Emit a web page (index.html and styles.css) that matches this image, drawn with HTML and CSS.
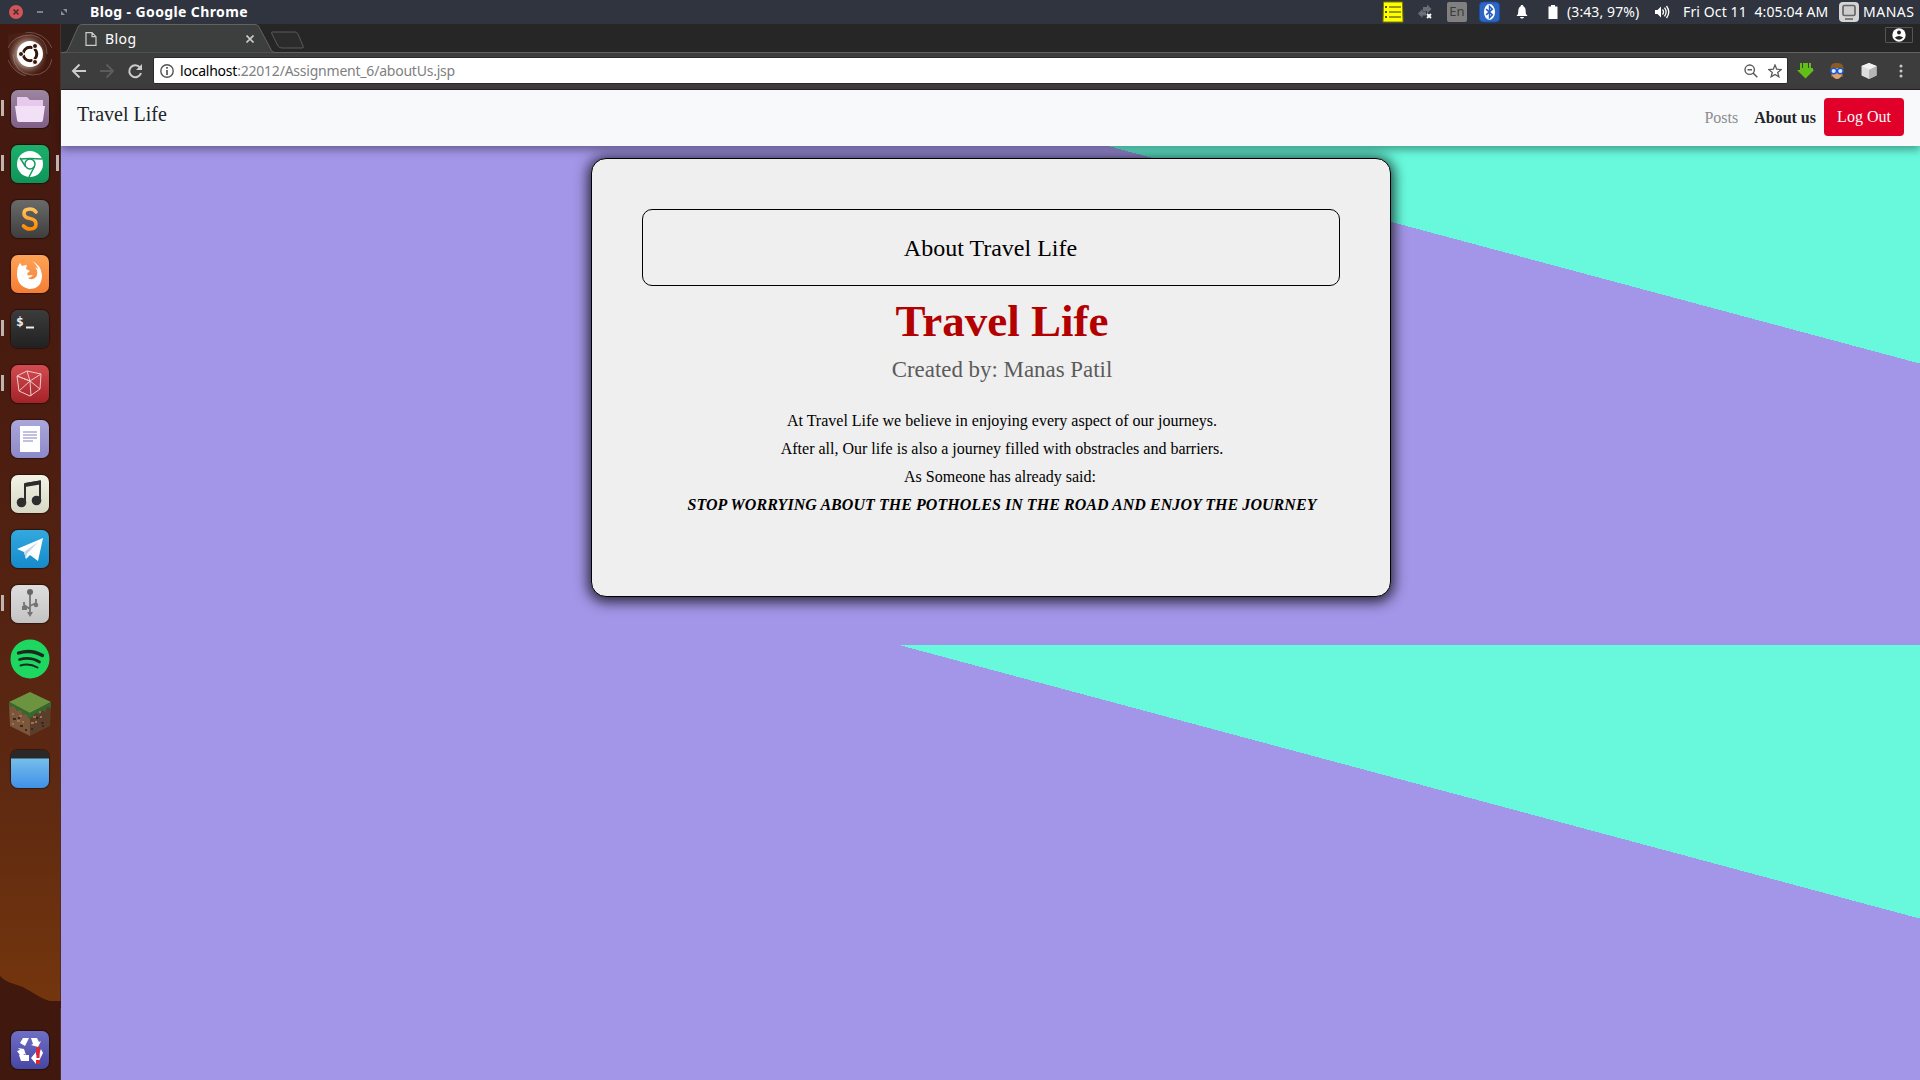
FILE: index.html
```html
<!DOCTYPE html>
<html lang="en">
<head>
<meta charset="utf-8">
<title>Blog</title>
<link rel="stylesheet" href="styles.css">
</head>
<body>
<header class="panel">
  <div class="window-buttons">
    <svg width="72" height="24" viewBox="0 0 72 24"><circle cx="16" cy="12" r="7" fill="#d0565b"/><path d="M13.5 9.500l5 5m0-5l-5 5" stroke="#55272d" stroke-width="1.700"/><path d="M37 12h6" stroke="#8c9199" stroke-width="1.700"/><path d="M63 9h4v4zM61 11v4h4z" fill="#8c9199"/></svg>
  </div>
  <span class="window-title fit">Blog - Google Chrome</span>
  <div class="indicators">
    <svg class="ind-list" width="22" height="22" viewBox="0 0 22 22"><path d="M1.500 1h19l.5 20H1z" fill="#ff0" stroke="#7c7d00"/><path d="M7 6h12M7 11h12M7 16h12" stroke="#777900" stroke-width="1.500"/><path d="M3 6h2M3 11h2M3 16h2" stroke="#555700" stroke-width="2"/></svg>
    <svg class="ind-net" width="16" height="16" viewBox="0 0 16 16"><path d="M14.500 5L10 .5V3H6v4h4v2.500zM1 9.500L5.500 5v2.500H9v4H5.500V14z" fill="#6a6e77"/><path d="M10 10l4 4m0-4l-4 4" stroke="#fff" stroke-width="1.800"/></svg>
    <span class="ind-lang">En</span>
    <svg class="ind-bt" width="21" height="22" viewBox="0 0 22 22"><rect x=".5" y=".5" width="21" height="21" rx="4" fill="#2e66c4" stroke="#164fae"/><ellipse cx="11" cy="11" rx="5.800" ry="8.300" fill="#fff"/><path d="M7.500 8l6.500 6-3 3V5l3 3-6.500 6" fill="none" stroke="#245fc2" stroke-width="1.500"/></svg>
    <svg class="ind-bell" width="12" height="14" viewBox="0 0 12 14"><path d="M6 0c1 0 1.500.6 1.500 1.500C10 2.500 9.500 6 10 9l1.500 2H.5L2 9c.5-3 0-6.500 2.500-7.500C4.500.6 5 0 6 0zM4 12h4c-.5 2-3.500 2-4 0z" fill="#fff"/></svg>
    <svg class="ind-bat" width="10" height="14" viewBox="0 0 10 14"><path d="M3 0h4v1.500h2.500V14H.5V1.500H3z" fill="#fff"/></svg>
    <span class="ind-power fit">(3:43, 97%)</span>
    <svg class="ind-vol" width="15" height="14" viewBox="0 0 15 14"><path d="M0 5h2.500L6 1.500v11L2.500 9H0z" fill="#fff"/><path d="M7.500 4.500q2 2.500 0 5M9.500 2.700q3.200 4.300 0 8.600M11.500 1q4.500 6 0 12" fill="none" stroke="#fff" stroke-width="1.300"/></svg>
    <span class="ind-date fit">Fri Oct 11&nbsp; 4:05:04 AM</span>
    <svg class="ind-user" width="20" height="22" viewBox="0 0 20 22"><rect y="1" width="20" height="20" rx="4" fill="#d5d5d5"/><rect x="4" y="4.500" width="12" height="10" rx="1.500" fill="#ccc" stroke="#666" stroke-width="1.700"/><path d="M6 18h8" stroke="#666" stroke-width="1.600"/></svg>
    <span class="ind-name fit">MANAS</span>
  </div>
</header>
<div class="desktop">
  <nav class="launcher">
    <svg class="ridge" width="61" height="40" viewBox="0 0 61 40"><path d="M0 8q6 6 14 8t16 7q14 9 20 10h11v7H0z" fill="#40180d"/></svg>
    <div class="apps">
      <div class="app"><svg viewBox="0 0 44 44"><defs><radialGradient id="swirl"><stop offset=".5" stop-color="#b59c93"/><stop offset="1" stop-color="#6d4438" stop-opacity=".15"/></radialGradient></defs><path d="M0 3q22-6 33 4 10 13 2 30-8 8-22 6Q-1 35 0 3z" fill="url(#swirl)"/><path d="M0 16Q5 3 24 3 39 6 39 22M44 27q-3 16-20 16Q6 41 5 22M17 0q20 0 27 16M0 28q6 13 18 16" fill="none" stroke="#e1d1ca" stroke-opacity=".3"/><circle cx="22" cy="22" r="13" fill="#fff"/><circle cx="22" cy="22" r="6.800" fill="none" stroke="#35160f" stroke-width="3"/><path d="M22 22H11M22 22l6-10M22 22l6 10" stroke="#fff" stroke-width="1.500"/><circle cx="22" cy="22" r="5" fill="#fff"/><g fill="#35160f" stroke="#fff"><circle cx="13" cy="22" r="2.500"/><circle cx="27" cy="14" r="2.500"/><circle cx="27" cy="30" r="2.500"/></g></svg></div>
      <div class="app run"><div class="tile files"><svg viewBox="0 0 38 38"><path d="M6 17V7h10l3 3h13v8z" fill="#e7c9ee"/><path d="M4 16h30l-2 14q0 2-2 2H8q-2 0-2-2z" fill="#f1e0f6"/></svg></div></div>
      <div class="app run active"><div class="tile chrome"><svg viewBox="0 0 38 38"><circle cx="19" cy="19" r="13" fill="#fff"/><g fill="none" stroke="#169b5d" stroke-width="1.500"><circle cx="19" cy="19" r="5"/><path d="M9 14q9-1 22 0M14.500 21.500L9 13M23.500 21.500L18 32"/></g></svg></div></div>
      <div class="app"><div class="tile sublime"><svg viewBox="0 0 38 38"><defs><linearGradient id="s" x2="0" y2="1"><stop stop-color="#ffc45c"/><stop offset="1" stop-color="#ff8a00"/></linearGradient></defs><path d="M25 12q-2-3-6-3-6 0-6 4.500 0 4 6 5t6 5.500q0 5-6 5-4 0-6.500-3" fill="none" stroke="url(#s)" stroke-width="3.600" stroke-linecap="round"/></svg></div></div>
      <div class="app"><div class="tile firefox"><svg viewBox="0 0 38 38"><path d="M9 8l2 3q3-1 5-1l-1 4 4 2-3 2.500 1 2 5-.5q-2 3-5 3 4 3 8-1 3-5-1-10l3 2q-1-4-6-8 9 4 10 14 0 14-13 14Q6 31 6 19q0-7 3-11z" fill="#fff"/></svg></div></div>
      <div class="app run"><div class="tile terminal"><span class="prompt">$</span><svg viewBox="0 0 38 38"><path d="M15 17.500h8" stroke="#eee" stroke-width="1.800"/></svg></div></div>
      <div class="app run"><div class="tile cube"><svg viewBox="0 0 38 38"><path d="M6 11l10-5 14 3-1 15-10 7L8 26zM6 11l13 5 11-7M19 16l1 15M16 6l3 10M8 26l11-10 10 8M6 11l13 5" fill="none" stroke="#f0caca"/></svg></div></div>
      <div class="app"><div class="tile writer"><svg viewBox="0 0 38 38"><path d="M9 6h20v26H9z" fill="#fff"/><path d="M12 12h14M12 15h14M12 18h14M12 21h10" stroke="#8582bf" stroke-width="1.200"/></svg></div></div>
      <div class="app"><div class="tile music"><svg viewBox="0 0 38 38"><path d="M14 27V9l15-2.500V25" fill="none" stroke="#2d2d2d" stroke-width="2"/><path d="M14 8l15-2.500v4L14 12z" fill="#2d2d2d"/><circle cx="10.500" cy="27.500" r="4.800" fill="#2d2d2d"/><circle cx="25.500" cy="25.500" r="4.800" fill="#2d2d2d"/></svg></div></div>
      <div class="app"><div class="tile telegram"><svg viewBox="0 0 38 38"><path d="M6 19L32 8l-5 23-8-6-4 4-2-7z" fill="#fff"/><path d="M13 22l14-10-11 12-1 5z" fill="#bed7e8"/></svg></div></div>
      <div class="app run"><div class="tile usb"><svg viewBox="0 0 38 38"><path d="M19 7v20M19 24l-6-4v-3M19 21l6-3v-4" fill="none" stroke="#747474" stroke-width="1.800"/><circle cx="19" cy="7" r="3" fill="#666"/><path d="M16 27h6l-3 5zM11 21h5v4h-5z" fill="#747474"/><circle cx="25" cy="20" r="2.300" fill="#747474"/></svg></div></div>
      <div class="app"><svg viewBox="0 0 44 44"><circle cx="22" cy="22" r="19.500" fill="#1ed760"/><g fill="none" stroke="#192b20" stroke-linecap="round"><path d="M10.500 16q13-4 24 2.500" stroke-width="3.400"/><path d="M11.500 22.500q11-3 20 2.500" stroke-width="2.700"/><path d="M12.500 28.500q9-2.500 17 2" stroke-width="2"/></g></svg></div>
      <div class="app"><svg viewBox="0 0 44 44"><path d="M1 11l21 9v24L2 34z" fill="#7c563b"/><path d="M43 11l-21 9v24l20-10z" fill="#5a3e2b"/><path d="M22 0l21 10-21 11L1 10z" fill="#6c9440"/><path d="M1 10l21 11 21-11v6l-4-1-2 5-3-2-3 5-3-2-4 4-3 2-3-5-3 1-2-5-4 1-3-5-4 1z" fill="#34682d"/><path d="M4 22h2m3 7h3m-8 3h2m5-8h3m-2 10h2m9-3h3m-1-6h3m3-5h2m-6 10h2M14 30h2m16-5h2" stroke="#a07250" stroke-width="2"/><path d="M5 27h3m4 7h3m8 3h2m3-11h2m3 5h3M10 26h2m5 12h2m15-4h2" stroke="#3b281d" stroke-width="2"/></svg></div>
      <div class="app"><div class="tile desk"></div></div>
    </div>
    <div class="app"><div class="tile trash"><svg viewBox="0 0 38 38"><path d="M12 7h6l-4 8-5-3zM20 7h6l2 4 2-1-3 6-7-2 2-1zM7 17l6 1 2 6-2-1-2 4-5-7 3-1zM8 24h10v6H10zM30 18l2 4-4 8h-3v3l-5-6 5-6v3l3-1z" fill="#fff"/><path d="M25 16h4l-.5 11h-3zM25 29h4v4h-4z" fill="#e12632"/></svg></div></div>
  </nav>
  <main class="browser">
    <div class="tabstrip">
      <svg class="tab-shape" width="244" height="29" viewBox="0 0 244 29"><path d="M0 28.500h3q3 0 4-3L17 3q1-2.500 4-2.500h173q3 0 4 2.500l12 22.500q1 3 4 3h30" fill="#3d3f3e" stroke="#626262"/><path d="M211 8h23q2 0 3 2l5 12q1 2-1 2h-20q-3 0-4-2l-6-12q-1-2 0-2z" fill="#2b2b2b" stroke="#5a5a5a"/></svg>
      <div class="tab">
        <svg width="12" height="14" viewBox="0 0 12 14"><path d="M1 .7h6l4 4v8.600H1zM7 .7v4h4" fill="none" stroke="#ccc" stroke-width="1.200"/></svg>
        <span class="tab-name fit">Blog</span>
        <svg class="tab-close" width="8" height="8" viewBox="0 0 8 8"><path d="M.5.5l7 7m0-7l-7 7" stroke="#c8c8c8" stroke-width="1.700"/></svg>
      </div>
      <div class="profile"><svg width="14" height="14" viewBox="0 0 14 14"><circle cx="7" cy="7" r="6.700" fill="#fff"/><circle cx="7" cy="4.500" r="2" fill="#252525"/><path d="M2.800 9.500q4.200-3 8.400 0Q7 14 2.800 9.500z" fill="#252525"/></svg></div>
    </div>
    <div class="toolbar">
      <svg class="nav-icons" width="74" height="16" viewBox="0 0 74 16"><g fill="none" stroke-width="2"><path d="M15 8H2m6.500-6.500L2 8l6.500 6.500" stroke="#ccc"/><path d="M29 8h13m-6.500-6.500L42 8l-6.500 6.500" stroke="#5c5c5c"/><path d="M69 4.500A6 6 0 1 0 70 10" stroke="#ccc"/></g><path d="M71 1v6h-6z" fill="#ccc"/></svg>
      <div class="urlbar">
        <svg width="14" height="14" viewBox="0 0 14 14"><circle cx="7" cy="7" r="6.200" fill="none" stroke="#555" stroke-width="1.400"/><path d="M7 6v5M7 3v1.700" stroke="#555" stroke-width="1.700"/></svg>
        <span class="url fit"><b>localhost</b>:22012/Assignment_6/aboutUs.jsp</span>
        <svg class="zoom-icon" width="14" height="14" viewBox="0 0 14 14"><circle cx="5.700" cy="5.700" r="4.700" fill="none" stroke="#5a5a5a" stroke-width="1.400"/><path d="M9 9l4.300 4.300M3.500 5.700H8" stroke="#5a5a5a" stroke-width="1.500"/></svg>
        <svg class="star" width="14" height="14" viewBox="0 0 14 14"><path d="M7 1l1.700 4.200 4.500.3-3.500 2.900 1.200 4.400L7 10.400l-3.900 2.400 1.200-4.400L.8 5.500l4.500-.3z" fill="none" stroke="#5a5a5a" stroke-width="1.300"/></svg>
      </div>
      <svg class="ext" width="120" height="18" viewBox="0 0 120 18"><path d="M3 1h2v5h1V1h5v5h1V1h2v5h2v2h1l-8.500 8.500L0 8h3z" fill="#61bf17"/><g><path d="M34 9q-2-8 6-8t6 8v6H34z" fill="#8e5a23"/><path d="M35 6h10v7q-2 4-5 4t-5-4z" fill="#dfa26a"/><path d="M34 5q5 1 7-2 2 3 5 3l-2-4-5-1-4 1z" fill="#8e5a23"/><circle cx="36.700" cy="9" r="2.800" fill="#dcecff" stroke="#1c57d0" stroke-width="1.400"/><circle cx="43.300" cy="9" r="2.800" fill="#dcecff" stroke="#1c57d0" stroke-width="1.400"/></g><path d="M72 1l7.500 3v9.500L72 17l-7.500-3.500V4z" fill="#ddd"/><path d="M72 8l7.500-4v9.500L72 17z" fill="#b5b5b5"/><path d="M72 1l7.500 3L72 7.500 64.500 4z" fill="#f2f2f2"/><g fill="#c8c8c8"><circle cx="104" cy="4" r="1.500"/><circle cx="104" cy="9" r="1.500"/><circle cx="104" cy="14" r="1.500"/></g></svg>
    </div>
    <div class="page">
      <div class="navbar">
        <span class="brand">Travel Life</span>
        <span class="link">Posts</span>
        <span class="link current">About us</span>
        <span class="logout">Log Out</span>
      </div>
      <section class="card">
        <div class="heading">About Travel Life</div>
        <div class="content">
          <h1>Travel Life</h1>
          <h2>Created by: Manas Patil</h2>
          <p>At Travel Life we believe in enjoying every aspect of our journeys.</p>
          <p>After all, Our life is also a journey filled with obstracles and barriers.</p>
          <p class="said">As Someone has already said:</p>
          <p class="quote">STOP WORRYING ABOUT THE POTHOLES IN THE ROAD AND ENJOY THE JOURNEY</p>
        </div>
      </section>
    </div>
  </main>
</div>
</body>
</html>
```
FILE: styles.css
```css
* { box-sizing: border-box; }
body { margin: 0; width: 1920px; height: 1080px; overflow: hidden; font-family: "Noto Sans", sans-serif; }
svg { display: block; flex: none; }
.fit { white-space: nowrap; }

.panel { height: 24px; background: #2f343f; color: #fff; display: flex; align-items: center; font-size: 14px; line-height: 24px; }
.window-buttons { width: 90px; }
.window-title { font-weight: 700; letter-spacing: .38px; }
.indicators { margin-left: auto; display: flex; align-items: center; padding-right: 5px; }
.ind-net { margin-left: 13px; }
.ind-lang { margin-left: 14px; width: 20px; height: 20px; line-height: 19px; background: #808080; color: #3c3c3c; text-align: center; font-size: 13px; border-radius: 2px; }
.ind-bt { margin-left: 12px; }
.ind-bell { margin-left: 16px; }
.ind-bat { margin-left: 20px; }
.ind-power { margin-left: 9px; width: 73px; letter-spacing: .1px; }
.ind-vol { margin-left: 15px; }
.ind-date { margin-left: 13px; width: 145px; letter-spacing: .12px; }
.ind-user { margin-left: 11px; }
.ind-name { margin-left: 4px; width: 52px; letter-spacing: .5px; }

.desktop { height: 1056px; display: flex; }
.launcher { width: 61px; padding: 2px 0 3px; position: relative; display: flex; flex-direction: column; justify-content: space-between; background: linear-gradient(#42180f 0, #4a1c10 35%, #5c2812 70%, #74360d 93%, #74360d 968px, #40180d 968px); border-right: 1px solid #4a3028; }
.ridge { position: absolute; left: 0; top: 944px; }
.apps { display: flex; flex-direction: column; }
.app { width: 60px; height: 55px; position: relative; display: flex; align-items: center; justify-content: center; flex: none; }
.app > svg { width: 44px; height: 44px; }
.run::before, .active::after { content: ""; position: absolute; left: 1px; top: 19px; width: 3px; height: 16px; background: #bfb4ae; }
.active::after { left: 56px; }
.tile { width: 38px; height: 38px; border-radius: 7px; box-shadow: 0 0 1px 1px rgba(0,0,0,.4); position: relative; overflow: hidden; }
.files { background: linear-gradient(#9c86a0, #805f87); }
.chrome { background: linear-gradient(#1cb06c, #109458); }
.sublime { background: linear-gradient(#6a6a6a, #3e3e3e); }
.firefox { background: linear-gradient(#ffa356, #f47e36); }
.terminal { background: linear-gradient(#3c3c3c, #212121); }
.prompt { position: absolute; left: 5px; top: 4px; font: bold 13px/15px "DejaVu Sans Mono", monospace; color: #eee; }
.cube { background: linear-gradient(#d34b51, #a32328); }
.writer { background: linear-gradient(#aaa7da, #8c89cb); }
.music { background: linear-gradient(#f3f3e6, #d7d7c5); }
.telegram { background: linear-gradient(#32a9df, #168acb); }
.usb { background: linear-gradient(#dedede, #c3c3c3); }
.desk { background: linear-gradient(#292929 8px, #75bdea 9px, #3f91e8); }
.trash { background: linear-gradient(#6f6fc5, #4646a5); }

.browser { flex: 1; min-width: 0; display: flex; flex-direction: column; }
.tabstrip { height: 29px; background: #262626; border-bottom: 1px solid #626262; position: relative; display: flex; align-items: flex-start; justify-content: space-between; }
.tab-shape { position: absolute; left: 0; top: 0; }
.tab { position: relative; width: 193px; height: 29px; padding-left: 24px; display: flex; align-items: center; color: #fff; font-size: 14px; }
.tab-name { margin-left: 8px; letter-spacing: .4px; }
.tab-close { margin-left: auto; }
.profile { margin: 3px 7px 0 0; width: 28px; height: 16px; border: 1px solid #555; border-radius: 1px; display: flex; align-items: center; justify-content: center; }
.toolbar { height: 37px; background: #3d3d3d; border-bottom: 1px solid #2a2022; display: flex; align-items: center; padding-bottom: 1px; }
.nav-icons { margin-left: 10px; }
.urlbar { margin-left: 8px; width: 1635px; height: 27px; background: #fff; border: 1px solid #2a2a2a; border-radius: 2px; display: flex; align-items: center; padding: 0 5px 0 6px; font-size: 14px; color: #808080; }
.url { margin-left: 6px; letter-spacing: -.22px; }
.url b { font-weight: 400; color: #000; }
.zoom-icon { margin-left: auto; }
.star { margin-left: 10px; }
.ext { margin-left: 9px; }

.page { flex: 1; font-family: "Liberation Serif", serif; background: linear-gradient(15deg, #a395e7 74.02%, #68f9dc 74.02%) 0 0 / 100% 555px; }
.navbar { height: 56px; background: #f8f9fb; display: flex; align-items: center; padding: 0 16px; font-size: 16px; position: relative; box-shadow: 0 4px 8px rgba(0,0,0,.35); }
.brand { font-size: 20px; line-height: 30px; margin: 0 auto 8px 0; color: #212529; }
.link { color: #8c8c8d; margin-right: 16px; }
.current { color: #212529; font-weight: 700; margin-right: 8px; }
.logout { width: 80px; height: 38px; border-radius: 4px; background: #e00029; color: #f8f9fa; text-align: center; line-height: 38px; margin-bottom: 2px; }
.card { margin: 12px auto 0; width: 800px; height: 439px; border: 1px solid #000; border-radius: 15px; background: #efefef; padding: 50px; box-shadow: 0 2px 13px 3px rgba(0,0,0,.75); text-align: center; color: #000; }
.heading { height: 77px; border: 1px solid #000; border-radius: 10px; font-size: 24px; line-height: 77px; }
.content { margin-left: 23px; }
.content h1 { margin: 7px 0 0; font-size: 45px; line-height: 56px; color: #b30000; }
.content h2 { margin: 7px 0 23px; font-size: 22.900px; line-height: 28px; font-weight: 400; color: #5b5b5b; }
.content p { margin: 0; font-size: 16px; line-height: 28px; }
.content .said { padding-right: 4px; }
.content .quote { font-style: italic; font-weight: 700; letter-spacing: .05px; }
```
